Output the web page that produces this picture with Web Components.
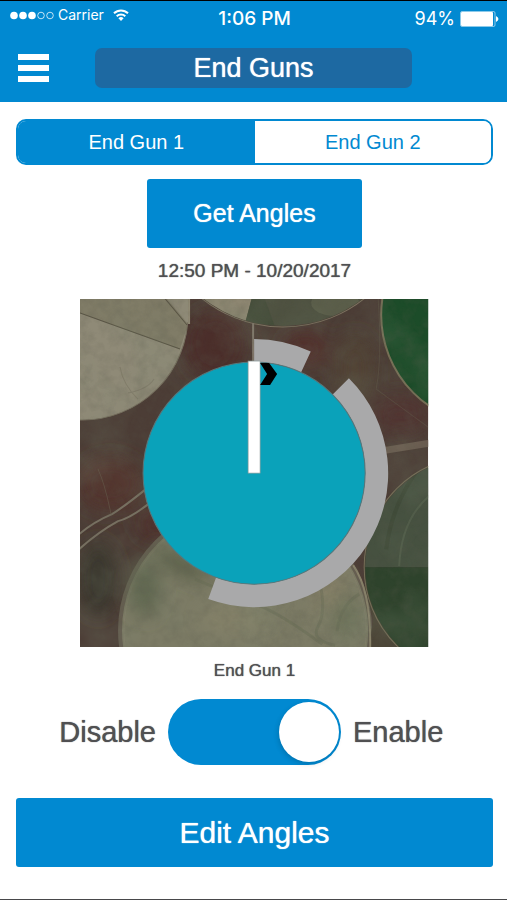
<!DOCTYPE html>
<html lang="en">
<head>
<meta charset="utf-8">
<meta name="viewport" content="width=device-width, initial-scale=1">
<title>End Guns</title>
<style>
  :root {
    --brand: #0189d1;
    --brand-dark: #1d69a2;
    --ink: #505052;
    --medium: 0 0 1px currentColor;
  }
  body {
    margin: 0;
    background: #fff;
    color: var(--ink);
    font-family: "Liberation Sans", Arial, sans-serif;
  }
</style>
</head>
<body>
<end-guns-page></end-guns-page>

<script>
const define = (name, html, setup) => {
  const template = document.createElement('template')
  template.innerHTML = html

  window.customElements.define(name, class extends HTMLElement {
    constructor () {
      super()
      this.attachShadow({ mode: 'open' })
      this.shadowRoot.appendChild(template.content.cloneNode(true))
    }

    connectedCallback () {
      if (setup) {
        setup(this, this.shadowRoot)
      }
    }
  })
}

define('status-bar', `
  <style>
    :host {
      display: grid;
      grid-template-columns: 1fr auto 1fr;
      align-items: start;
      padding: 4px 8px 0 10px;
      color: #fff;
      font-family: Inter, sans-serif;
    }
    svg { display: block; flex: none; }
    .carrier, .battery { display: flex; align-items: center; }
    .carrier { font-size: 14px; line-height: 20px; gap: 4px; }
    .carrier .wifi { margin-left: 5px; }
    .time { font-size: 19px; font-weight: 500; line-height: 28px; }
    .battery { justify-content: flex-end; gap: 5px; font-size: 18px; line-height: 28px; }
  </style>
  <div class="carrier">
    <svg width="44" height="9" viewBox="0 0 44 9" aria-hidden="true">
      <g fill="#fff"><circle cx="4" cy="4.5" r="3.8"/><circle cx="13" cy="4.5" r="3.8"/><circle cx="22" cy="4.5" r="3.8"/></g>
      <g fill="none" stroke="#fff" stroke-opacity=".75"><circle cx="31" cy="4.5" r="3.3"/><circle cx="40" cy="4.5" r="3.3"/></g>
    </svg>
    <span>Carrier</span>
    <svg class="wifi" width="16" height="12" viewBox="0 0 16 12" fill="none" stroke="#fff" stroke-width="2" aria-hidden="true">
      <path d="M1 4.3A10 10 0 0 1 15 4.3"/>
      <path d="M3.7 7.2A6.2 6.2 0 0 1 12.3 7.2"/>
      <path d="M8 12L5.4 9.3A3.8 3.8 0 0 1 10.6 9.3Z" fill="#fff" stroke="none"/>
    </svg>
  </div>
  <div class="time">1:06 PM</div>
  <div class="battery">
    <span>94%</span>
    <svg width="39" height="16" viewBox="0 0 39 16" aria-hidden="true">
      <rect x=".5" y=".5" width="34.5" height="15" rx="1.5" fill="none" stroke="#fff" stroke-opacity=".55"/>
      <rect x="1" y="1" width="32" height="14" rx="1" fill="#fff"/>
      <path d="M36 5Q41 8 36 11Z" fill="#fff"/>
    </svg>
  </div>
`)

define('title-bar', `
  <style>
    :host {
      display: grid;
      grid-template-columns: 1fr 5fr 1fr;
      align-items: center;
      column-gap: 14px;
      padding: 15px 18px 14px;
    }
    button {
      display: block;
      justify-self: start;
      padding: 0;
      border: 0;
      background: none;
    }
    svg { display: block; }
    h1 {
      margin: 0;
      border-radius: 7px;
      background: var(--brand-dark);
      color: #fff;
      font-size: 27px;
      font-weight: 400;
      line-height: 40px;
      text-align: center;
      text-shadow: var(--medium);
    }
  </style>
  <button type="button" aria-label="Menu">
    <svg width="31" height="28" viewBox="0 0 31 28" fill="#fff">
      <rect width="31" height="6"/><rect y="11" width="31" height="6"/><rect y="22" width="31" height="6"/>
    </svg>
  </button>
  <h1><slot></slot></h1>
`)

define('segmented-control', `
  <style>
    :host {
      display: grid;
      grid-template-columns: 1fr 1fr;
      overflow: hidden;
      border: 2px solid var(--brand);
      border-radius: 10px;
    }
    button {
      padding: 0;
      border: 0;
      background: #fff;
      color: var(--brand);
      font: 20px/42px "Liberation Sans", Arial, sans-serif;
    }
    button[aria-pressed="true"] {
      background: var(--brand);
      color: #fff;
    }
  </style>
  <button type="button" aria-pressed="true">End Gun 1</button>
  <button type="button" aria-pressed="false">End Gun 2</button>
`, (host, root) => {
  const buttons = [...root.querySelectorAll('button')]
  buttons.forEach(button => {
    button.onclick = () => buttons.forEach(b => b.setAttribute('aria-pressed', b === button))
  })
})

define('action-button', `
  <style>
    :host { display: block; }
    button {
      display: block;
      width: 100%;
      padding: 0;
      border: 0;
      border-radius: 3px;
      background: var(--brand);
      color: #fff;
      font: 25px/69px "Liberation Sans", Arial, sans-serif;
      text-shadow: var(--medium);
    }
    :host([large]) button { font-size: 30px; }
  </style>
  <button type="button"><slot></slot></button>
`)

define('pivot-map', `
  <style>
    :host { display: block; }
    svg { display: block; width: 100%; }
  </style>
  <svg viewBox="0 0 348 348" role="img" aria-label="Field map">
    <defs>
      <filter id="grain" x="0" y="0" width="100%" height="100%">
        <feTurbulence type="fractalNoise" baseFrequency=".09" numOctaves="4" seed="7"/>
        <feColorMatrix values="0 0 0 0 .1  0 0 0 0 .1  0 0 0 0 .07  1.6 0 0 0 -.62"/>
      </filter>
      <filter id="cloud" x="0" y="0" width="100%" height="100%">
        <feTurbulence type="fractalNoise" baseFrequency=".02" numOctaves="3" seed="12"/>
        <feColorMatrix values="0 0 0 0 .2  0 0 0 0 .25  0 0 0 0 .17  0 1.8 0 0 -.75"/>
      </filter>
      <filter id="soft"><feGaussianBlur stdDeviation="9"/></filter>
      <clipPath id="frame"><rect width="348" height="348"/></clipPath>
      <clipPath id="north"><circle cx="203" cy="-102" r="129"/></clipPath>
      <clipPath id="east"><circle cx="395" cy="268" r="110"/></clipPath>
    </defs>
    <g clip-path="url(#frame)">
      <rect width="348" height="348" fill="#4c3d36"/>
      <g filter="url(#soft)">
        <ellipse cx="135" cy="45" rx="32" ry="36" fill="#4b2f2b"/>
        <ellipse cx="225" cy="50" rx="25" ry="18" fill="#512f2b"/>
        <ellipse cx="320" cy="115" rx="30" ry="20" fill="#513630"/>
        <ellipse cx="30" cy="185" rx="34" ry="28" fill="#52342d"/>
        <ellipse cx="80" cy="225" rx="25" ry="18" fill="#4d2e29"/>
        <ellipse cx="18" cy="280" rx="20" ry="38" fill="#3b382d"/>
        <ellipse cx="275" cy="70" rx="20" ry="35" fill="#514236"/>
      </g>

      <circle cx="2" cy="15" r="106" fill="#8f8a77" stroke="#77705f" stroke-width="1"/>
      <path d="M80-5L108 24V-5Z" fill="#8f8a77"/>
      <path d="M0 14L100 50L108 25L84-4H0Z" fill="#69664f" opacity=".4"/>
      <path d="M0 14L25 23L100 50M82-4L107 26" fill="none" stroke="#5a5545" stroke-width="1"/>
      <path d="M109 0V25" stroke="#918a75" stroke-width="2"/>
      <path d="M40 68Q43 86 58 100M48 94Q68 90 74 80" fill="none" stroke="#625d4c" opacity=".3"/>

      <g clip-path="url(#north)">
        <rect x="100" width="200" height="30" fill="#4e5140"/>
        <path d="M120-2H172L164 28H120Z" fill="#8d8671"/>
        <path d="M172-2L164 28H195L184-2Z" fill="#454d3a"/>
        <ellipse cx="255" cy="4" rx="24" ry="13" fill="#5b5e4a"/>
      </g>
      <circle cx="203" cy="-102" r="130" fill="none" stroke="#7d7360" stroke-width="1"/>
      <path d="M173 24V62" stroke="#81766a" stroke-width="2"/>

      <circle cx="411" cy="16" r="110" fill="#1c4c29" stroke="#777057" stroke-width="2"/>
      <path d="M298 0Q302 60 296 90L348 128" fill="none" stroke="#67604e" opacity=".4"/>

      <path d="M-2 236Q13 223 32 215Q45 207 72 185M-2 251Q18 233 38 222Q51 219 72 202" fill="none" stroke="#777061" stroke-width="2"/>
      <path d="M18 170Q25 185 31 215" fill="none" stroke="#655a4b" opacity=".6"/>
      <path d="M300 152Q325 148 350 144" fill="none" stroke="#6b5c50" stroke-width="7"/>

      <circle cx="165" cy="331" r="125" fill="#7c7b65" stroke="#655d50" stroke-width="4"/>
      <circle cx="165" cy="331" r="121" fill="none" stroke="#8a8470" opacity=".5"/>
      <g filter="url(#soft)">
        <ellipse cx="65" cy="290" rx="15" ry="28" fill="#5e664f"/>
        <ellipse cx="100" cy="265" rx="32" ry="8" transform="rotate(30 100 265)" fill="#555b44"/>
        <ellipse cx="155" cy="320" rx="35" ry="13" fill="#858269"/>
        <ellipse cx="250" cy="295" rx="15" ry="30" fill="#858067"/>
        <ellipse cx="265" cy="318" rx="12" ry="20" fill="#6a7057"/>
      </g>
      <path d="M115 280Q155 297 178 306T242 345M240 285Q246 313 238 327T255 346M279 295Q260 306 257 332" fill="none" stroke="#606650" stroke-width="3" opacity=".35"/>
      <path d="M285 238V290L293 320L289 348H324Z" fill="#4b4436"/>

      <g clip-path="url(#east)">
        <rect x="280" y="140" width="70" height="128" fill="#465140"/>
        <rect x="280" y="268" width="70" height="82" fill="#2e432c"/>
        <path d="M350 196Q321 220 319 267" fill="none" stroke="#65705a" stroke-width="2" opacity=".4"/>
        <path d="M306 250Q312 205 338 170" fill="none" stroke="#37432f" stroke-width="4" opacity=".4"/>
      </g>
      <circle cx="395" cy="268" r="111" fill="none" stroke="#767058" stroke-width="1"/>
      <path d="M273 266Q291 292 290 348" fill="none" stroke="#8b846c" stroke-width="2"/>

      <rect width="348" height="348" filter="url(#cloud)" opacity=".25"/>
      <rect width="348" height="348" filter="url(#grain)" opacity=".28"/>
    </g>

    <g id="guns" fill="#a9a9aa"></g>
    <circle cx="174" cy="174" r="111" fill="#0aa2ba" stroke="#58777b"/>
    <rect x="168" y="62" width="12" height="112" fill="#fff" stroke="#8c9a99" stroke-width=".7"/>
    <path d="M180 64H189L197 75L190 86H180L187 75Z"/>
  </svg>
`, (host, root) => {
  // each gun range is start-end in degrees, clockwise from north
  const point = (deg, r) => {
    const a = deg * Math.PI / 180
    return `${174 + r * Math.sin(a)} ${174 - r * Math.cos(a)}`
  }
  const guns = root.querySelector('#guns')
  guns.textContent = ''
  host.getAttribute('ranges').split(' ').forEach(range => {
    const [from, to] = range.split('-').map(Number)
    const path = document.createElementNS('http://www.w3.org/2000/svg', 'path')
    path.setAttribute('d', `M${point(from, 134)}A134 134 0 0 1 ${point(to, 134)}L${point(to, 111)}A111 111 0 0 0 ${point(from, 111)}Z`)
    guns.appendChild(path)
  })
})

define('toggle-switch', `
  <style>
    :host {
      display: grid;
      grid-template-columns: 1fr auto 1fr;
      align-items: center;
      column-gap: 12px;
      font-size: 29px;
      line-height: 34px;
      text-shadow: var(--medium);
    }
    .off { text-align: right; }
    input {
      appearance: none;
      display: flex;
      align-items: center;
      box-sizing: border-box;
      width: 173px;
      height: 66px;
      margin: 0;
      padding: 0 2px;
      border-radius: 33px;
      background: #b5b5b5;
    }
    input::before {
      content: "";
      width: 60px;
      height: 60px;
      border-radius: 50%;
      background: #fff;
      box-shadow: -1px 2px 5px rgba(0, 0, 0, .15);
    }
    input:checked {
      justify-content: flex-end;
      background: var(--brand);
    }
  </style>
  <label class="off" for="state">Disable</label>
  <input id="state" type="checkbox" role="switch" checked>
  <label for="state">Enable</label>
`)

define('end-guns-page', `
  <style>
    :host {
      display: block;
      box-sizing: border-box;
      min-height: 100vh;
      border-bottom: 1px solid #48484a;
    }
    header {
      border-top: 1px solid #000;
      background: var(--brand);
    }
    main {
      display: flex;
      flex-direction: column;
      padding: 17px 14px 30px 16px;
    }
    .fetch { width: 45%; margin: 14px auto 0; }
    p {
      margin: 11px 0 16px;
      font-size: 19px;
      line-height: 24px;
      text-align: center;
      text-shadow: var(--medium);
    }
    pivot-map { width: 73%; margin: 0 auto; }
    .caption { margin: 12px 0 16px; font-size: 17px; }
    .edit { margin-top: 33px; }
  </style>
  <header>
    <status-bar></status-bar>
    <title-bar>End Guns</title-bar>
  </header>
  <main>
    <segmented-control></segmented-control>
    <action-button class="fetch">Get Angles</action-button>
    <p>12:50 PM - 10/20/2017</p>
    <pivot-map ranges="0-25 45-200"></pivot-map>
    <p class="caption">End Gun 1</p>
    <toggle-switch></toggle-switch>
    <action-button class="edit" large>Edit Angles</action-button>
  </main>
`)
</script>
</body>
</html>
